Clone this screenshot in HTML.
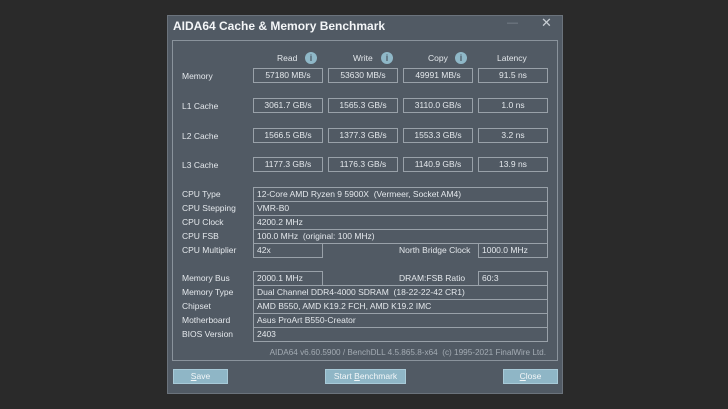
<!DOCTYPE html>
<html><head><meta charset="utf-8"><style>
*{margin:0;padding:0;box-sizing:border-box}
body{width:728px;height:409px;background:#2a2a2a;position:relative;overflow:hidden;font-family:"Liberation Sans",sans-serif;color:#e4e8ec;font-size:8.5px}
.win{position:absolute;left:167px;top:15px;width:396px;height:379px;background:#515a64;border:1px solid #6b737c}
.pan{position:absolute;left:172px;top:40px;width:386px;height:321px;border:1px solid #8a939c}
.a{position:absolute;white-space:nowrap;line-height:14px}
.b{position:absolute;border:1px solid #99a1a9;height:15px;line-height:13px;text-align:center;white-space:nowrap}
.r{position:absolute;border:1px solid #99a1a9;height:15px;line-height:13px;padding-left:3px;white-space:nowrap}
.i{position:absolute;width:12px;height:12px;border-radius:50%;background:#8fb8c8;color:#4d5a66;font-weight:bold;font-size:9px;text-align:center;line-height:12px}
.btn{position:absolute;top:369px;height:15px;background:#8fb6c6;border:1px solid #a8cad8;color:#f2f6f8;text-align:center;line-height:13px}
</style></head><body>
<div class="win"></div>
<div class="a" style="left:173px;top:19px;font-size:12px;font-weight:bold;color:#f4f6f8">AIDA64 Cache &amp; Memory Benchmark</div>
<div class="a" style="left:507px;top:16px;font-size:11px;color:#7f8790">—</div>
<div class="a" style="left:541px;top:16px;font-size:13px;color:#c8ced4">✕</div>
<div class="pan"></div>

<div class="a" style="left:277px;top:51px">Read</div><div class="i" style="left:305px;top:52px">i</div>
<div class="a" style="left:353px;top:51px">Write</div><div class="i" style="left:381px;top:52px">i</div>
<div class="a" style="left:428px;top:51px">Copy</div><div class="i" style="left:455px;top:52px">i</div>
<div class="a" style="left:497px;top:51px">Latency</div>

<div class="a" style="left:182px;top:69px">Memory</div>
<div class="b" style="left:253px;top:68px;width:70px">57180 MB/s</div>
<div class="b" style="left:328px;top:68px;width:70px">53630 MB/s</div>
<div class="b" style="left:403px;top:68px;width:70px">49991 MB/s</div>
<div class="b" style="left:478px;top:68px;width:70px">91.5 ns</div>

<div class="a" style="left:182px;top:99px">L1 Cache</div>
<div class="b" style="left:253px;top:98px;width:70px">3061.7 GB/s</div>
<div class="b" style="left:328px;top:98px;width:70px">1565.3 GB/s</div>
<div class="b" style="left:403px;top:98px;width:70px">3110.0 GB/s</div>
<div class="b" style="left:478px;top:98px;width:70px">1.0 ns</div>

<div class="a" style="left:182px;top:129px">L2 Cache</div>
<div class="b" style="left:253px;top:128px;width:70px">1566.5 GB/s</div>
<div class="b" style="left:328px;top:128px;width:70px">1377.3 GB/s</div>
<div class="b" style="left:403px;top:128px;width:70px">1553.3 GB/s</div>
<div class="b" style="left:478px;top:128px;width:70px">3.2 ns</div>

<div class="a" style="left:182px;top:158px">L3 Cache</div>
<div class="b" style="left:253px;top:157px;width:70px">1177.3 GB/s</div>
<div class="b" style="left:328px;top:157px;width:70px">1176.3 GB/s</div>
<div class="b" style="left:403px;top:157px;width:70px">1140.9 GB/s</div>
<div class="b" style="left:478px;top:157px;width:70px">13.9 ns</div>

<div class="a" style="left:182px;top:187px">CPU Type</div>
<div class="a" style="left:182px;top:201px">CPU Stepping</div>
<div class="a" style="left:182px;top:215px">CPU Clock</div>
<div class="a" style="left:182px;top:229px">CPU FSB</div>
<div class="a" style="left:182px;top:243px">CPU Multiplier</div>
<div class="r" style="left:253px;top:187px;width:295px">12-Core AMD Ryzen 9 5900X&nbsp; (Vermeer, Socket AM4)</div>
<div class="r" style="left:253px;top:201px;width:295px">VMR-B0</div>
<div class="r" style="left:253px;top:215px;width:295px">4200.2 MHz</div>
<div class="r" style="left:253px;top:229px;width:295px">100.0 MHz&nbsp; (original: 100 MHz)</div>
<div class="r" style="left:253px;top:243px;width:70px">42x</div>
<div class="a" style="left:399px;top:243px">North Bridge Clock</div>
<div class="r" style="left:478px;top:243px;width:70px">1000.0 MHz</div>

<div class="a" style="left:182px;top:271px">Memory Bus</div>
<div class="a" style="left:182px;top:285px">Memory Type</div>
<div class="a" style="left:182px;top:299px">Chipset</div>
<div class="a" style="left:182px;top:313px">Motherboard</div>
<div class="a" style="left:182px;top:327px">BIOS Version</div>
<div class="r" style="left:253px;top:271px;width:70px">2000.1 MHz</div>
<div class="a" style="left:399px;top:271px">DRAM:FSB Ratio</div>
<div class="r" style="left:478px;top:271px;width:70px">60:3</div>
<div class="r" style="left:253px;top:285px;width:295px">Dual Channel DDR4-4000 SDRAM&nbsp; (18-22-22-42 CR1)</div>
<div class="r" style="left:253px;top:299px;width:295px">AMD B550, AMD K19.2 FCH, AMD K19.2 IMC</div>
<div class="r" style="left:253px;top:313px;width:295px">Asus ProArt B550-Creator</div>
<div class="r" style="left:253px;top:327px;width:295px">2403</div>

<div class="a" style="right:182px;top:346px;color:#a3abb3;font-size:8.2px">AIDA64 v6.60.5900 / BenchDLL 4.5.865.8-x64&nbsp; (c) 1995-2021 FinalWire Ltd.</div>

<div class="btn" style="left:173px;width:55px"><u>S</u>ave</div>
<div class="btn" style="left:325px;width:81px">Start <u>B</u>enchmark</div>
<div class="btn" style="left:503px;width:55px"><u>C</u>lose</div>
</body></html>
